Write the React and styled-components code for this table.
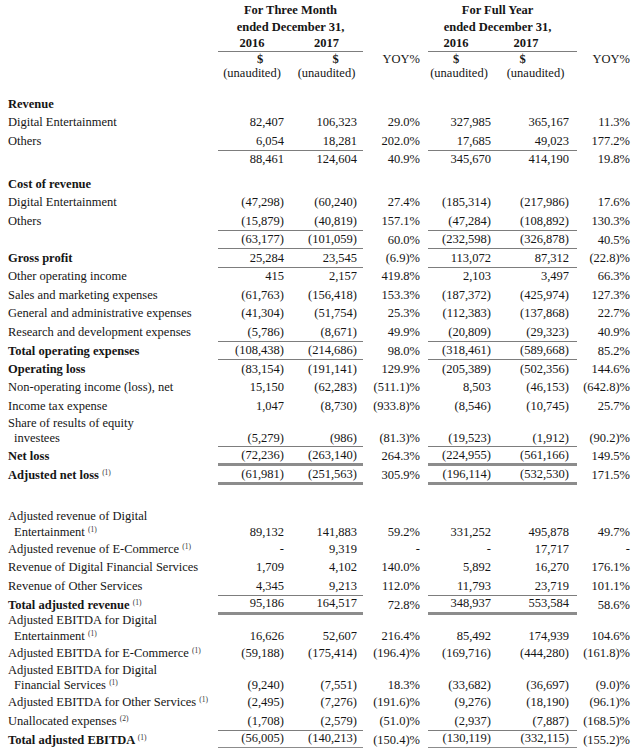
import React from "react";
import styled, { createGlobalStyle } from "styled-components";

const GlobalStyle = createGlobalStyle`
  html, body {
    margin: 0;
    padding: 0;
    background: #ffffff;
  }
  body {
    font-family: "Liberation Serif", "Times New Roman", serif;
    color: #151515;
  }
`;

// 列: 3개월(2016, 2017, YOY) / 연간(2016, 2017, YOY)
const rows = [
  { label: "Revenue", bold: true },
  { label: "Digital Entertainment", v: ["82,407", "106,323", "29.0%", "327,985", "365,167", "11.3%"] },
  { label: "Others", v: ["6,054", "18,281", "202.0%", "17,685", "49,023", "177.2%"], line: "single" },
  { label: "", v: ["88,461", "124,604", "40.9%", "345,670", "414,190", "19.8%"] },
  { label: "Cost of revenue", bold: true, gap: 6 },
  { label: "Digital Entertainment", v: ["(47,298)", "(60,240)", "27.4%", "(185,314)", "(217,986)", "17.6%"] },
  { label: "Others", v: ["(15,879)", "(40,819)", "157.1%", "(47,284)", "(108,892)", "130.3%"], line: "single" },
  { label: "", v: ["(63,177)", "(101,059)", "60.0%", "(232,598)", "(326,878)", "40.5%"], line: "single" },
  { label: "Gross profit", bold: true, v: ["25,284", "23,545", "(6.9)%", "113,072", "87,312", "(22.8)%"], line: "single" },
  { label: "Other operating income", v: ["415", "2,157", "419.8%", "2,103", "3,497", "66.3%"] },
  { label: "Sales and marketing expenses", v: ["(61,763)", "(156,418)", "153.3%", "(187,372)", "(425,974)", "127.3%"] },
  { label: "General and administrative expenses", v: ["(41,304)", "(51,754)", "25.3%", "(112,383)", "(137,868)", "22.7%"] },
  { label: "Research and development expenses", v: ["(5,786)", "(8,671)", "49.9%", "(20,809)", "(29,323)", "40.9%"], line: "single" },
  { label: "Total operating expenses", bold: true, v: ["(108,438)", "(214,686)", "98.0%", "(318,461)", "(589,668)", "85.2%"], line: "single" },
  { label: "Operating loss", bold: true, v: ["(83,154)", "(191,141)", "129.9%", "(205,389)", "(502,356)", "144.6%"] },
  { label: "Non-operating income (loss), net", v: ["15,150", "(62,283)", "(511.1)%", "8,503", "(46,153)", "(642.8)%"] },
  { label: "Income tax expense", v: ["1,047", "(8,730)", "(933.8)%", "(8,546)", "(10,745)", "25.7%"] },
  { label: "Share of results of equity", sub: "investees", v: ["(5,279)", "(986)", "(81.3)%", "(19,523)", "(1,912)", "(90.2)%"], line: "single" },
  { label: "Net loss", bold: true, v: ["(72,236)", "(263,140)", "264.3%", "(224,955)", "(561,166)", "149.5%"], line: "double" },
  { label: "Adjusted net loss", note: "(1)", bold: true, v: ["(61,981)", "(251,563)", "305.9%", "(196,114)", "(532,530)", "171.5%"], line: "double" },
  { label: "Adjusted revenue of Digital", sub: "Entertainment", note: "(1)", gap: 24, v: ["89,132", "141,883", "59.2%", "331,252", "495,878", "49.7%"] },
  { label: "Adjusted revenue of E-Commerce", note: "(1)", v: ["-", "9,319", "-", "-", "17,717", "-"] },
  { label: "Revenue of Digital Financial Services", v: ["1,709", "4,102", "140.0%", "5,892", "16,270", "176.1%"] },
  { label: "Revenue of Other Services", v: ["4,345", "9,213", "112.0%", "11,793", "23,719", "101.1%"], line: "single" },
  { label: "Total adjusted revenue", note: "(1)", bold: true, v: ["95,186", "164,517", "72.8%", "348,937", "553,584", "58.6%"], line: "double" },
  { label: "Adjusted EBITDA for Digital", sub: "Entertainment", note: "(1)", v: ["16,626", "52,607", "216.4%", "85,492", "174,939", "104.6%"] },
  { label: "Adjusted EBITDA for E-Commerce", note: "(1)", v: ["(59,188)", "(175,414)", "(196.4)%", "(169,716)", "(444,280)", "(161.8)%"] },
  { label: "Adjusted EBITDA for Digital", sub: "Financial Services", note: "(1)", v: ["(9,240)", "(7,551)", "18.3%", "(33,682)", "(36,697)", "(9.0)%"] },
  { label: "Adjusted EBITDA for Other Services", note: "(1)", v: ["(2,495)", "(7,276)", "(191.6)%", "(9,276)", "(18,190)", "(96.1)%"] },
  { label: "Unallocated expenses", note: "(2)", v: ["(1,708)", "(2,579)", "(51.0)%", "(2,937)", "(7,887)", "(168.5)%"], line: "single" },
  { label: "Total adjusted EBITDA", note: "(1)", bold: true, v: ["(56,005)", "(140,213)", "(150.4)%", "(130,119)", "(332,115)", "(155.2)%"], line: "double" },
];

// 숫자 칸 오른쪽 여백 (열 순서대로)
const padRight = [6, 6, 8, 9, 8, 2];
// 밑줄이 그어지는 열인지 (YOY 열은 제외)
const underlined = [true, true, false, true, true, false];

// 줄 종류별 위/아래 여백 (테두리 포함해서 행 높이를 맞춤)
const rowPad = {
  none: ["1.5px", "1.5px"],
  single: ["1.5px", "0.5px"],
  double: ["0.5px", "0px"],
};

function App() {
  return (
    <Page>
      <GlobalStyle />
      <Table>
        <colgroup>
          <col style={{ width: 210 }} />
          <col style={{ width: 72 }} />
          <col style={{ width: 73 }} />
          <col style={{ width: 65 }} />
          <col style={{ width: 72 }} />
          <col style={{ width: 77 }} />
          <col style={{ width: 55 }} />
        </colgroup>
        <thead>
          <HeadRow $h={17} $top={2}>
            <th />
            <HeadCell colSpan={2} $bold>For Three Month</HeadCell>
            <th />
            <HeadCell colSpan={2} $bold $pr={10}>For Full Year</HeadCell>
            <th />
          </HeadRow>
          <HeadRow $h={16}>
            <th />
            <HeadCell colSpan={2} $bold>ended December 31,</HeadCell>
            <th />
            <HeadCell colSpan={2} $bold $pr={10}>ended December 31,</HeadCell>
            <th />
          </HeadRow>
          <HeadRow $h={16}>
            <th />
            <HeadCell $bold $rule $pr={4}>2016</HeadCell>
            <HeadCell $bold $rule>2017</HeadCell>
            <th />
            <HeadCell $bold $rule $pr={16}>2016</HeadCell>
            <HeadCell $bold $rule $pr={25}>2017</HeadCell>
            <th />
          </HeadRow>
          <HeadRow $h={14}>
            <th />
            <HeadCell $bold $pl={12}>$</HeadCell>
            <HeadCell $bold $pl={18}>$</HeadCell>
            <YoyHead $pr={padRight[2]}>YOY%</YoyHead>
            <HeadCell $bold $pr={16}>$</HeadCell>
            <HeadCell $bold $pr={32}>$</HeadCell>
            <YoyHead $pr={padRight[5]}>YOY%</YoyHead>
          </HeadRow>
          <HeadRow $h={15}>
            <th />
            <HeadCell $pr={4}>(unaudited)</HeadCell>
            <HeadCell>(unaudited)</HeadCell>
            <th />
            <HeadCell $pr={10}>(unaudited)</HeadCell>
            <HeadCell $pr={6}>(unaudited)</HeadCell>
            <th />
          </HeadRow>
          <Spacer $h={14}>
            <td colSpan={7} />
          </Spacer>
        </thead>
        <tbody>
          {rows.map((row, i) => {
            const pad = rowPad[row.line || "none"];
            const note = row.note ? (
              <>
                {" "}
                <Sup>{row.note}</Sup>
              </>
            ) : null;
            return (
              <React.Fragment key={i}>
                {row.gap ? (
                  <Spacer $h={row.gap}>
                    <td colSpan={7} />
                  </Spacer>
                ) : null}
                <tr>
                  <Label $bold={row.bold} $pt={row.sub ? "0px" : pad[0]} $pb={row.sub ? "0px" : pad[1]}>
                    {row.label}
                    {row.sub ? (
                      <SubLine>
                        {row.sub}
                        {note}
                      </SubLine>
                    ) : (
                      note
                    )}
                  </Label>
                  {(row.v || ["", "", "", "", "", ""]).map((val, j) => (
                    <Num
                      key={j}
                      $pr={padRight[j]}
                      $pt={row.sub ? "0px" : pad[0]}
                      $pb={row.sub ? "0px" : pad[1]}
                      $line={underlined[j] ? row.line : null}
                    >
                      {val}
                    </Num>
                  ))}
                </tr>
              </React.Fragment>
            );
          })}
        </tbody>
      </Table>
    </Page>
  );
}

const Page = styled.div`
  padding: 0 8px;
  width: 624px;
`;

const Table = styled.table`
  border-collapse: collapse;
  table-layout: fixed;
  width: 624px;
  font-size: 12.5px;
  color: #151515;
`;

const HeadRow = styled.tr`
  th {
    padding: 0;
    padding-top: ${p => p.$top || 0}px;
    height: ${p => p.$h}px;
    line-height: ${p => p.$h}px;
  }
`;

const HeadCell = styled.th`
  text-align: center;
  white-space: nowrap;
  font-weight: ${p => (p.$bold ? 700 : 400)};
  padding-left: ${p => p.$pl || 0}px !important;
  padding-right: ${p => p.$pr || 0}px !important;
  border-bottom: ${p => (p.$rule ? "1px solid #7d7d7d" : "none")};
`;

const YoyHead = styled.th`
  text-align: right;
  font-weight: 400;
  white-space: nowrap;
  padding-right: ${p => p.$pr}px !important;
`;

const Spacer = styled.tr`
  td {
    height: ${p => p.$h}px;
    padding: 0;
  }
`;

const Label = styled.td`
  padding: ${p => p.$pt} 0 ${p => p.$pb} 0;
  line-height: 15.5px;
  white-space: nowrap;
  font-weight: ${p => (p.$bold ? 700 : 400)};
  vertical-align: bottom;
`;

const SubLine = styled.span`
  display: block;
  padding-left: 6px;
`;

const Num = styled.td`
  padding: ${p => p.$pt} ${p => p.$pr}px ${p => p.$pb} 0;
  line-height: 15.5px;
  text-align: right;
  white-space: nowrap;
  vertical-align: bottom;
  border-bottom: ${p =>
    p.$line === "double"
      ? "3px solid #8c8c8c"
      : p.$line === "single"
      ? "1px solid #7d7d7d"
      : "none"};
`;

const Sup = styled.span`
  font-size: 7.5px;
  font-weight: 400;
  color: #333;
  vertical-align: 4px;
  line-height: 0;
`;

export default App;
